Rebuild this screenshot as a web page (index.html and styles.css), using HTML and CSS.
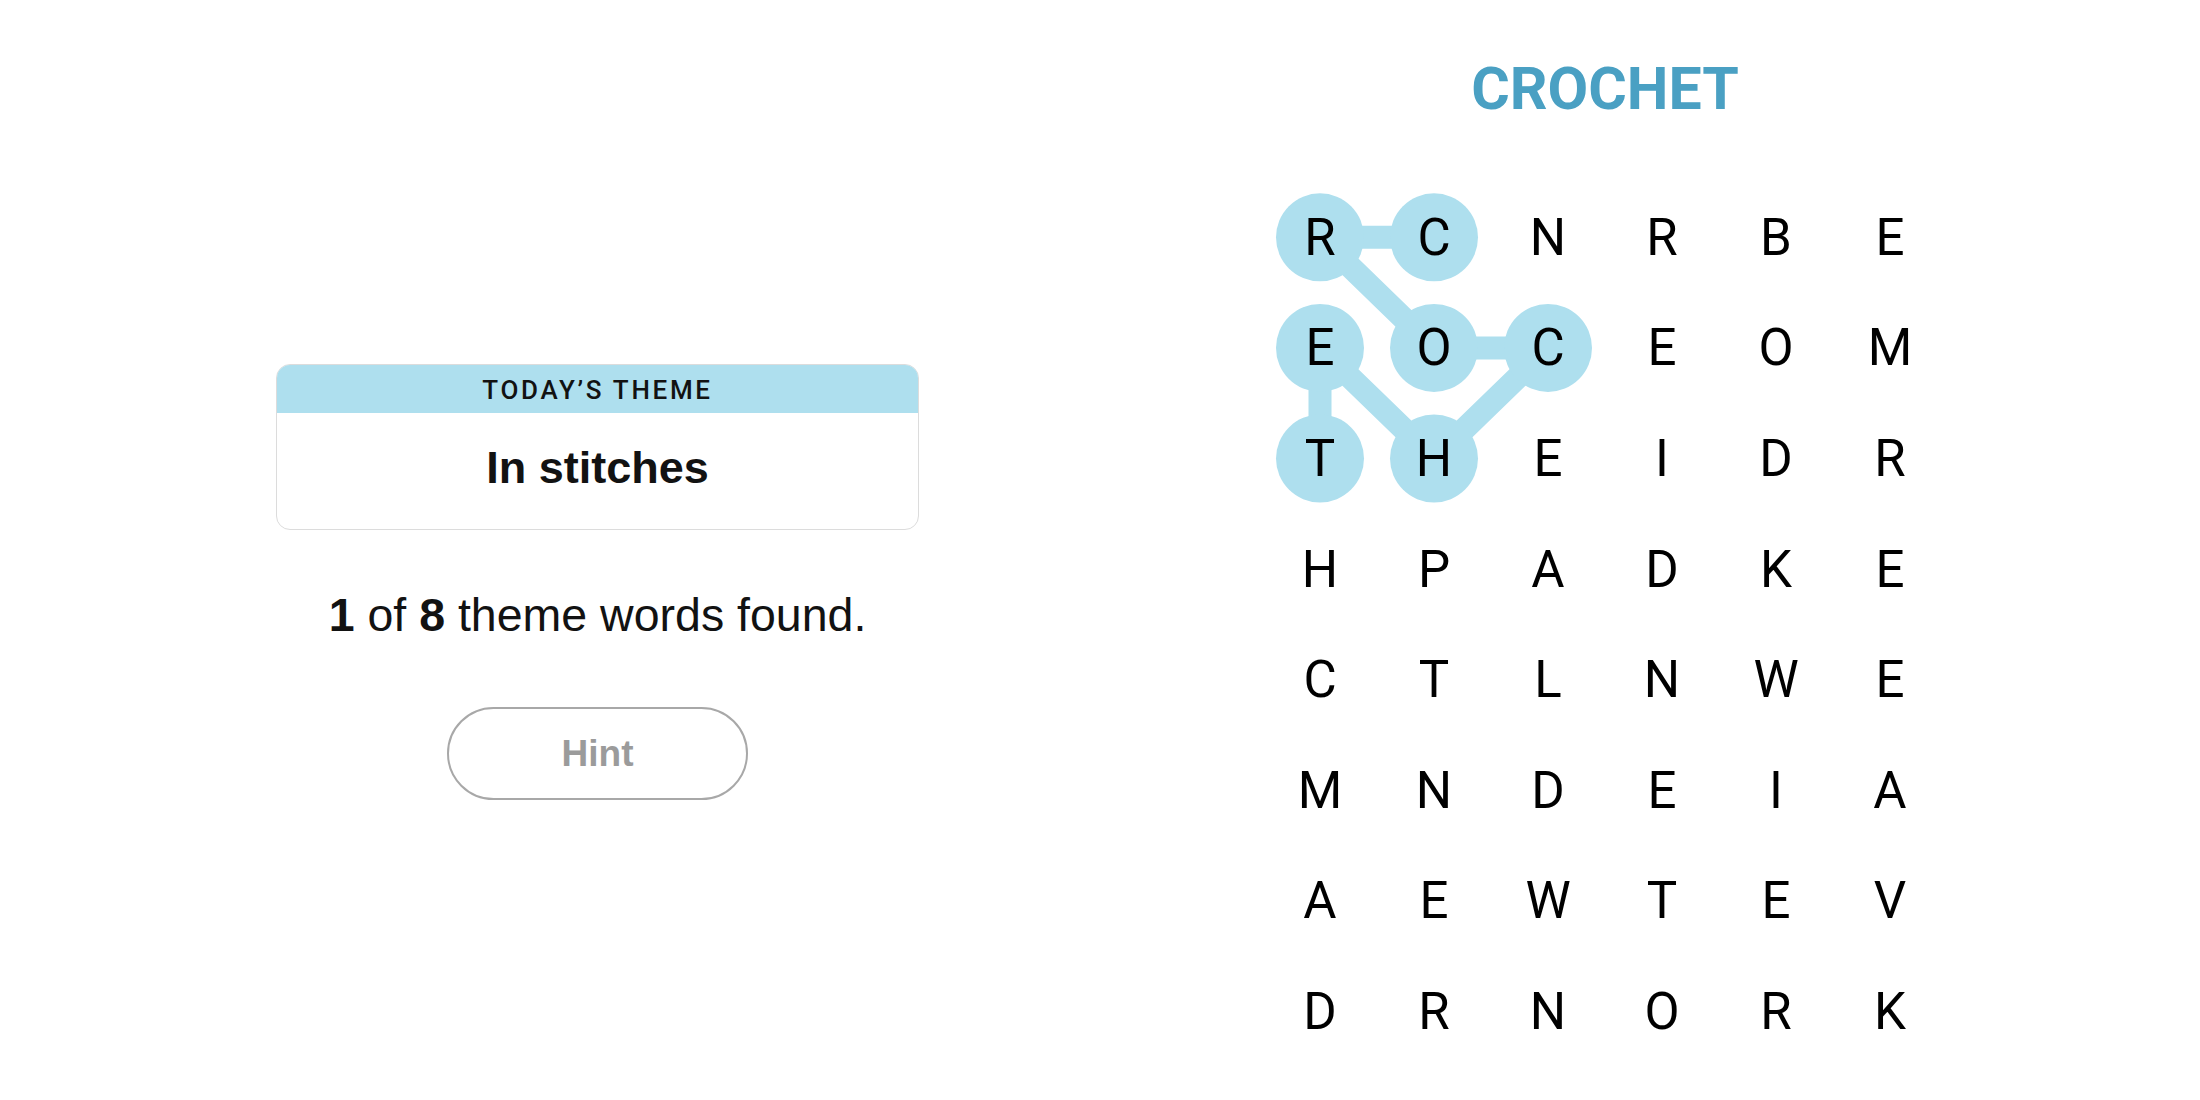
FILE: index.html
```html
<!DOCTYPE html>
<html>
<head>
    <meta charset="UTF-8">
    <meta name="viewport" content="width=device-width, initial-scale=1.0">
    <title>Strands</title>
    <link rel="stylesheet" href="styles.css">
</head>
<body>
    <div class="page">
        <div class="sidePanel">
            <div class="themeCard">
                <div class="themeLabel">TODAY’S THEME</div>
                <div class="themeName">In stitches</div>
            </div>
            <p class="progress"><b>1</b> of <b>8</b> theme words found.</p>
            <button class="hintBtn" type="button">Hint</button>
        </div>

        <div class="board">
            <h1 class="currentWord">CROCHET</h1>
            <div class="grid">
                <!-- path of the found word, drawn under the letters -->
                <svg class="trail" width="684" height="885" viewBox="0 0 684 885">
                    <polyline points="171,55.3 57,55.3 171,165.9 285,165.9 171,276.5 57,165.9 57,276.5"
                              fill="none" stroke="#aedfee" stroke-width="23" stroke-linejoin="round"/>
                    <circle cx="57" cy="55.3" r="44" fill="#aedfee"/>
                    <circle cx="171" cy="55.3" r="44" fill="#aedfee"/>
                    <circle cx="57" cy="165.9" r="44" fill="#aedfee"/>
                    <circle cx="171" cy="165.9" r="44" fill="#aedfee"/>
                    <circle cx="285" cy="165.9" r="44" fill="#aedfee"/>
                    <circle cx="57" cy="276.5" r="44" fill="#aedfee"/>
                    <circle cx="171" cy="276.5" r="44" fill="#aedfee"/>
                </svg>

                <span class="cell">R</span><span class="cell">C</span><span class="cell">N</span><span class="cell">R</span><span class="cell">B</span><span class="cell">E</span>
                <span class="cell">E</span><span class="cell">O</span><span class="cell">C</span><span class="cell">E</span><span class="cell">O</span><span class="cell">M</span>
                <span class="cell">T</span><span class="cell">H</span><span class="cell">E</span><span class="cell">I</span><span class="cell">D</span><span class="cell">R</span>
                <span class="cell">H</span><span class="cell">P</span><span class="cell">A</span><span class="cell">D</span><span class="cell">K</span><span class="cell">E</span>
                <span class="cell">C</span><span class="cell">T</span><span class="cell">L</span><span class="cell">N</span><span class="cell">W</span><span class="cell">E</span>
                <span class="cell">M</span><span class="cell">N</span><span class="cell">D</span><span class="cell">E</span><span class="cell">I</span><span class="cell">A</span>
                <span class="cell">A</span><span class="cell">E</span><span class="cell">W</span><span class="cell">T</span><span class="cell">E</span><span class="cell">V</span>
                <span class="cell">D</span><span class="cell">R</span><span class="cell">N</span><span class="cell">O</span><span class="cell">R</span><span class="cell">K</span>
            </div>
        </div>
    </div>
</body>
</html>
```

FILE: styles.css
```css
body {
    margin: 0;
    background: #ffffff;
    color: #000000;
    font-family: "Liberation Sans", Arial, sans-serif;
}

.page {
    display: flex;
    align-items: flex-start;
    gap: 344px;
    padding-left: 276px;
    height: 1100px;
}

.sidePanel {
    width: 643px;
    display: flex;
    flex-direction: column;
    align-items: center;
    padding-top: 364px;
}

.themeCard {
    width: 100%;
    box-sizing: border-box;
    border: 1px solid #dcdcdc;
    border-radius: 14px;
    overflow: hidden;
}

.themeLabel {
    height: 48px;
    line-height: 50px;
    background: #aedfee;
    text-align: center;
    font-family: Roboto, "Liberation Sans", sans-serif;
    font-weight: 500;
    font-size: 26px;
    letter-spacing: 2.7px;
    color: #121212;
}

.themeName {
    height: 116px;
    box-sizing: border-box;
    padding-bottom: 6px;
    line-height: 110px;
    text-align: center;
    font-weight: bold;
    font-size: 45px;
    color: #121212;
}

.progress {
    margin: 57px 0 0;
    line-height: 56px;
    font-size: 46.5px;
    color: #121212;
}

.hintBtn {
    margin-top: 64px;
    width: 301px;
    height: 93px;
    border: 2px solid #a8a8a8;
    border-radius: 47px;
    background: #ffffff;
    font-family: "Liberation Sans", Arial, sans-serif;
    font-weight: bold;
    font-size: 37px;
    color: #9b9b9b;
}

.board {
    display: flex;
    flex-direction: column;
    align-items: center;
    width: 684px;
    padding-top: 59px;
}

.currentWord {
    margin: 0;
    line-height: 60px;
    font-family: Roboto, "Liberation Sans", sans-serif;
    font-weight: 700;
    font-size: 59px;
    color: #4aa0c3;
}

.grid {
    position: relative;
    margin-top: 63px;
    display: grid;
    grid-template-columns: repeat(6, 114px);
    grid-template-rows: repeat(8, 110.6px);
}

.trail {
    position: absolute;
    left: 0;
    top: 0;
}

.cell {
    position: relative;
    display: flex;
    justify-content: center;
    align-items: center;
    font-family: Roboto, "Liberation Sans", sans-serif;
    font-size: 51px;
    color: #000000;
}
```
